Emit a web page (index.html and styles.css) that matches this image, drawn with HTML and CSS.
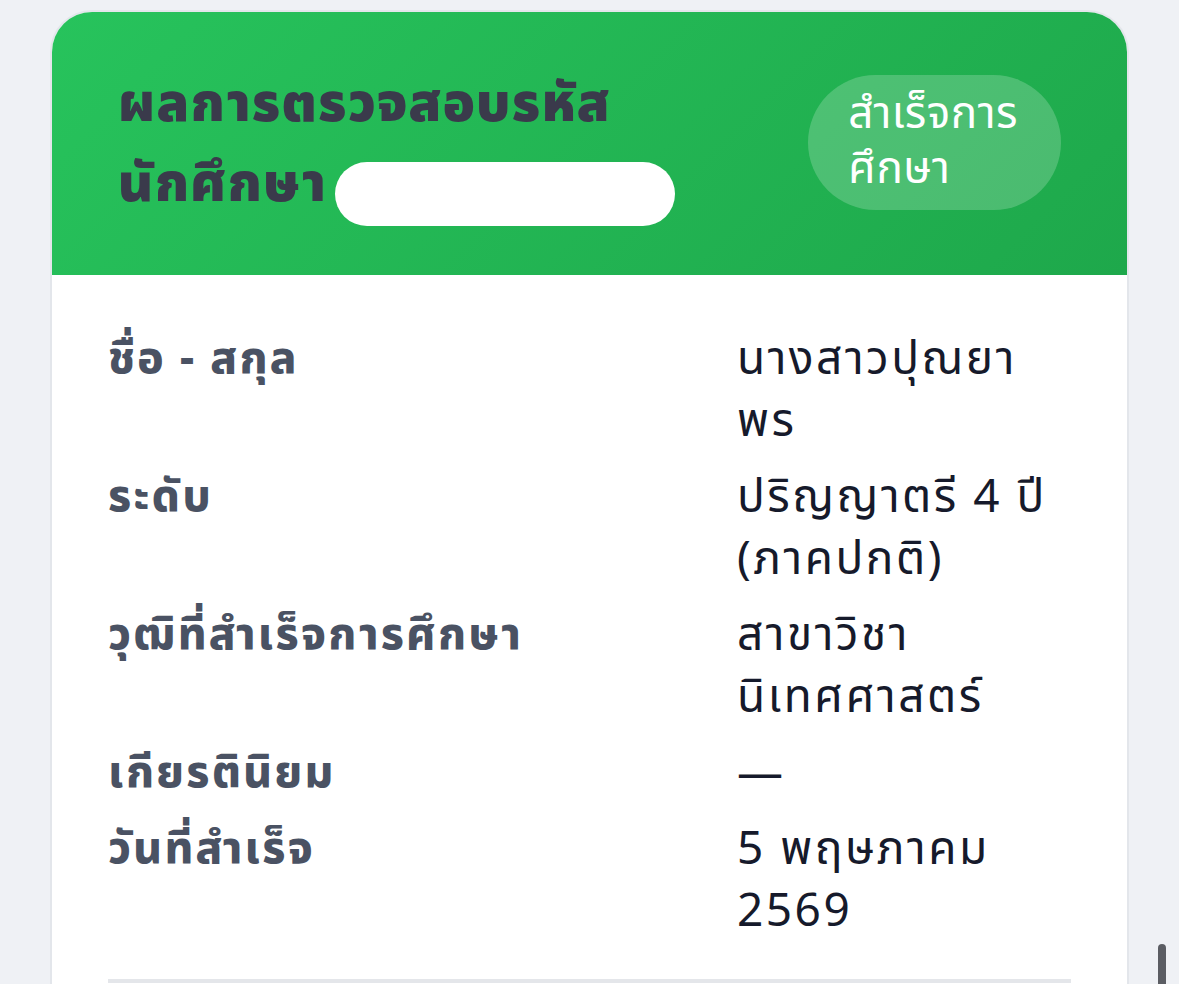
FILE: index.html
```html
<!DOCTYPE html>
<html lang="th">
<head>
<meta charset="utf-8">
<title>ผลการตรวจสอบรหัสนักศึกษา</title>
<link rel="stylesheet" href="styles.css">
</head>
<body>
<main class="page">
  <section class="card">
    <header class="card-head">
      <h1 class="title">ผลการตรวจสอบรหัส<br>นักศึกษา <span class="redact"></span></h1>
      <span class="badge">สำเร็จการ<br>ศึกษา</span>
    </header>
    <div class="card-body">
      <dl class="info">
        <div class="row"><dt>ชื่อ - สกุล</dt><dd>นางสาวปุณยา<br>พร</dd></div>
        <div class="row"><dt>ระดับ</dt><dd>ปริญญาตรี 4 ปี<br>(ภาคปกติ)</dd></div>
        <div class="row"><dt>วุฒิที่สำเร็จการศึกษา</dt><dd>สาขาวิชา<br>นิเทศศาสตร์</dd></div>
        <div class="row"><dt>เกียรตินิยม</dt><dd>—</dd></div>
        <div class="row"><dt>วันที่สำเร็จ</dt><dd>5 พฤษภาคม<br>2569</dd></div>
      </dl>
      <hr class="divider">
    </div>
  </section>
  <div class="scrollbar"></div>
</main>
</body>
</html>
```
FILE: styles.css
```css
* { box-sizing: border-box; }
html, body { margin: 0; padding: 0; }
body {
  background: #eff1f5;
  font-family: "Noto Sans Thai", "Noto Sans", "Liberation Sans", sans-serif;
  width: 1179px;
  height: 984px;
  overflow: hidden;
}
.page {
  position: relative;
  padding: 10px 50px 0 50px;
  height: 984px;
}
.card {
  background: #ffffff;
  border: 2px solid #e3e6eb;
  border-bottom: none;
  border-radius: 42px 42px 0 0;
  overflow: hidden;
  height: 990px;
}
.card-head {
  display: flex;
  justify-content: space-between;
  align-items: center;
  height: 263px;
  padding: 0 66px 0 66px;
  background: linear-gradient(135deg, #27c35c 0%, #1ea84b 100%);
}
.title {
  margin: 0;
  font-size: 53px;
  font-weight: 900;
  line-height: 80px;
  letter-spacing: 1.3px;
  color: #3a3a4b;
  padding-top: 4px;
}
.redact {
  display: inline-block;
  width: 340px;
  height: 64px;
  margin-left: -7px;
  background: #ffffff;
  border-radius: 32px;
  vertical-align: -25px;
}
.badge {
  display: inline-block;
  background: rgba(255, 255, 255, 0.2);
  color: #ffffff;
  font-size: 44px;
  line-height: 55px;
  letter-spacing: 0.5px;
  padding: 12px 43px 13px 40px;
  border-radius: 68px;
  margin-top: -2px;
}
.card-body {
  padding: 54px 56px 0 56px;
}
.info { margin: 0; }
.row {
  display: grid;
  grid-template-columns: 629px 1fr;
  margin-bottom: 14px;
}
dt {
  font-weight: 800;
  font-size: 44px;
  line-height: 62px;
  color: #4a5263;
  letter-spacing: 2.4px;
}
dd {
  margin: 0;
  font-size: 46px;
  line-height: 62px;
  color: #161a2b;
  letter-spacing: 2.5px;
}
.divider {
  border: none;
  height: 4px;
  background: #e4e6ea;
  margin: 36px 0 0 0;
}
.scrollbar {
  position: absolute;
  right: 13px;
  top: 944px;
  width: 8px;
  height: 60px;
  border-radius: 4px;
  background: #5b5d63;
}
```
